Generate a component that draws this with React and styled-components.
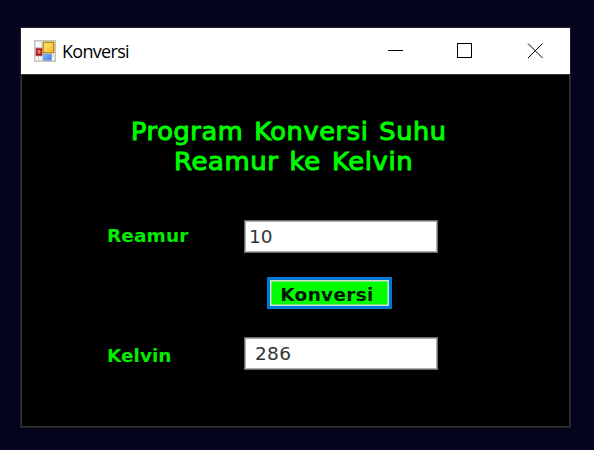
import React from "react";
import styled, { createGlobalStyle } from "styled-components";

const Page = createGlobalStyle`
  * { box-sizing: border-box; }
  body { margin: 0; background: #05051f; overflow: hidden; }
`;

const Desktop = styled.main`
  width: 594px;
  height: 450px;
  padding: 27px 23px 22px 20px;
  background: #05051f;
`;

const Window = styled.section`
  width: 551px;
  height: 401px;
  border: 1px solid #202024;
  background: #000;
  display: flex;
  flex-direction: column;
  box-shadow: 0 3px 16px rgba(0, 0, 0, 0.2);
`;

const TitleBar = styled.header`
  height: 46px;
  flex: none;
  display: flex;
  align-items: center;
  background: #fff;
  padding-left: 13px;
`;

const Caption = styled.span`
  flex: 1;
  margin-left: 6px;
  font: 18px/24px "Open Sans", sans-serif;
  letter-spacing: ${(p) => p.$tracking}px;
  color: #000;
`;

const WindowButton = styled.button`
  width: 70px;
  height: 46px;
  padding: 0;
  border: 0;
  background: transparent;
  display: grid;
  place-items: center;
`;

const Client = styled.form`
  flex: 1;
  border: 1px solid #333;
  background: #000;
  padding: 42px 0 0 85px;
`;

const Heading = styled.h1`
  margin: 0 0 0 24px;
  width: 316px;
  font: 24px/30px "DejaVu Sans", sans-serif;
  color: #00fa00;
  -webkit-text-stroke: 1px #00fa00;
  white-space: nowrap;
`;

const HeadingLine = styled.span`
  display: block;
  margin-left: ${(p) => p.$indent}px;
  letter-spacing: ${(p) => p.$tracking}px;
  word-spacing: 2px;
  transform: scaleX(${(p) => p.$stretch});
  transform-origin: left;
`;

const Row = styled.div`
  display: flex;
  align-items: center;
  height: 33px;
  margin-top: ${(p) => p.$gap}px;
`;

const Label = styled.label`
  width: 137px;
  padding: ${(p) => p.$drop || 0}px 0 ${(p) => p.$lift || 0}px;
  font: bold 18.5px/24px "DejaVu Sans", sans-serif;
  letter-spacing: ${(p) => p.$tracking}px;
  color: #00ee00;
`;

const Field = styled.input`
  width: 194px;
  height: 33px;
  margin: 0;
  padding: 0 0 0 ${(p) => p.$inset}px;
  border: 1px solid #6a6a6a;
  box-shadow: inset 0 0 0 1px #adadad;
  outline: 0;
  background: #fff;
  color: #333;
  font: 18.5px/24px "DejaVu Sans", sans-serif;
  letter-spacing: ${(p) => p.$tracking}px;
`;

const Convert = styled.button`
  display: block;
  width: 125px;
  height: 32px;
  margin: 24px 0 0 160px;
  padding: 3px 5px 0 0;
  border: 3px solid #0078d7;
  box-shadow: inset 0 0 0 1.5px #d5ddd5;
  background: #00ff00;
  color: #001800;
  font: bold 18.5px/22px "DejaVu Sans", sans-serif;
  letter-spacing: 0.3px;
`;

function FormIcon() {
  return (
    <svg width="22" height="22" viewBox="0 0 22 22">
      <defs>
        <linearGradient id="gold" x2="1" y2="1">
          <stop stopColor="#ffe98a" />
          <stop offset="1" stopColor="#f0b91c" />
        </linearGradient>
        <linearGradient id="blue" x2="1" y2="1">
          <stop stopColor="#8fb9fa" />
          <stop offset="1" stopColor="#3a78e0" />
        </linearGradient>
      </defs>
      <rect x=".75" y=".75" width="20.5" height="20.5" fill="#f7f7f7" stroke="#c3c3c3" strokeWidth="1.5" />
      <path d="M8 1V21M1 7.5H8M1 16H21M4.5 16V21" fill="none" stroke="#cbcbcb" />
      <rect x="1.7" y="8.2" width="6.6" height="7.6" fill="#a81e22" />
      <rect x="3.5" y="10" width="3" height="3.5" fill="#e57b73" />
      <rect x="9.3" y="2.3" width="10.4" height="10.4" fill="url(#gold)" stroke="#bf8d0a" strokeWidth="1.4" />
      <rect x="9.2" y="14" width="8.2" height="6.2" fill="url(#blue)" stroke="#6c94d5" strokeWidth=".6" />
    </svg>
  );
}

function Glyph({ d, sharp }) {
  return (
    <svg width="16" height="16" viewBox="0 0 16 16" fill="none" stroke="#000" shapeRendering={sharp ? "crispEdges" : "auto"}>
      <path d={d} strokeWidth={1} />
    </svg>
  );
}

export default function App() {
  return (
    <>
      <Page />
      <Desktop>
        <Window>
          <TitleBar>
            <FormIcon />
            <Caption $tracking={-0.7}>Konversi</Caption>
            <WindowButton type="button" aria-label="Minimize"><Glyph sharp d="M.5 7.5H15.5" /></WindowButton>
            <WindowButton type="button" aria-label="Maximize"><Glyph sharp d="M.5 .5H14.5V14.5H.5Z" /></WindowButton>
            <WindowButton type="button" aria-label="Close"><Glyph d="M1 .5L15.5 15M15.5 .5L1 15" /></WindowButton>
          </TitleBar>
          <Client onSubmit={(e) => e.preventDefault()}>
            <Heading>
              <HeadingLine $indent={0} $tracking={0.6} $stretch={1.065}>Program Konversi Suhu</HeadingLine>
              <HeadingLine $indent={43} $tracking={0.6} $stretch={1.077}>Reamur ke Kelvin</HeadingLine>
            </Heading>
            <Row $gap={43}>
              <Label htmlFor="reamur" $tracking={0.1} $lift={2}>Reamur</Label>
              <Field id="reamur" $inset={4} $tracking={0} defaultValue="10" />
            </Row>
            <Convert>Konversi</Convert>
            <Row $gap={28}>
              <Label htmlFor="kelvin" $tracking={0} $drop={4}>Kelvin</Label>
              <Field id="kelvin" $inset={10} $tracking={0.3} defaultValue="286" />
            </Row>
          </Client>
        </Window>
      </Desktop>
    </>
  );
}
